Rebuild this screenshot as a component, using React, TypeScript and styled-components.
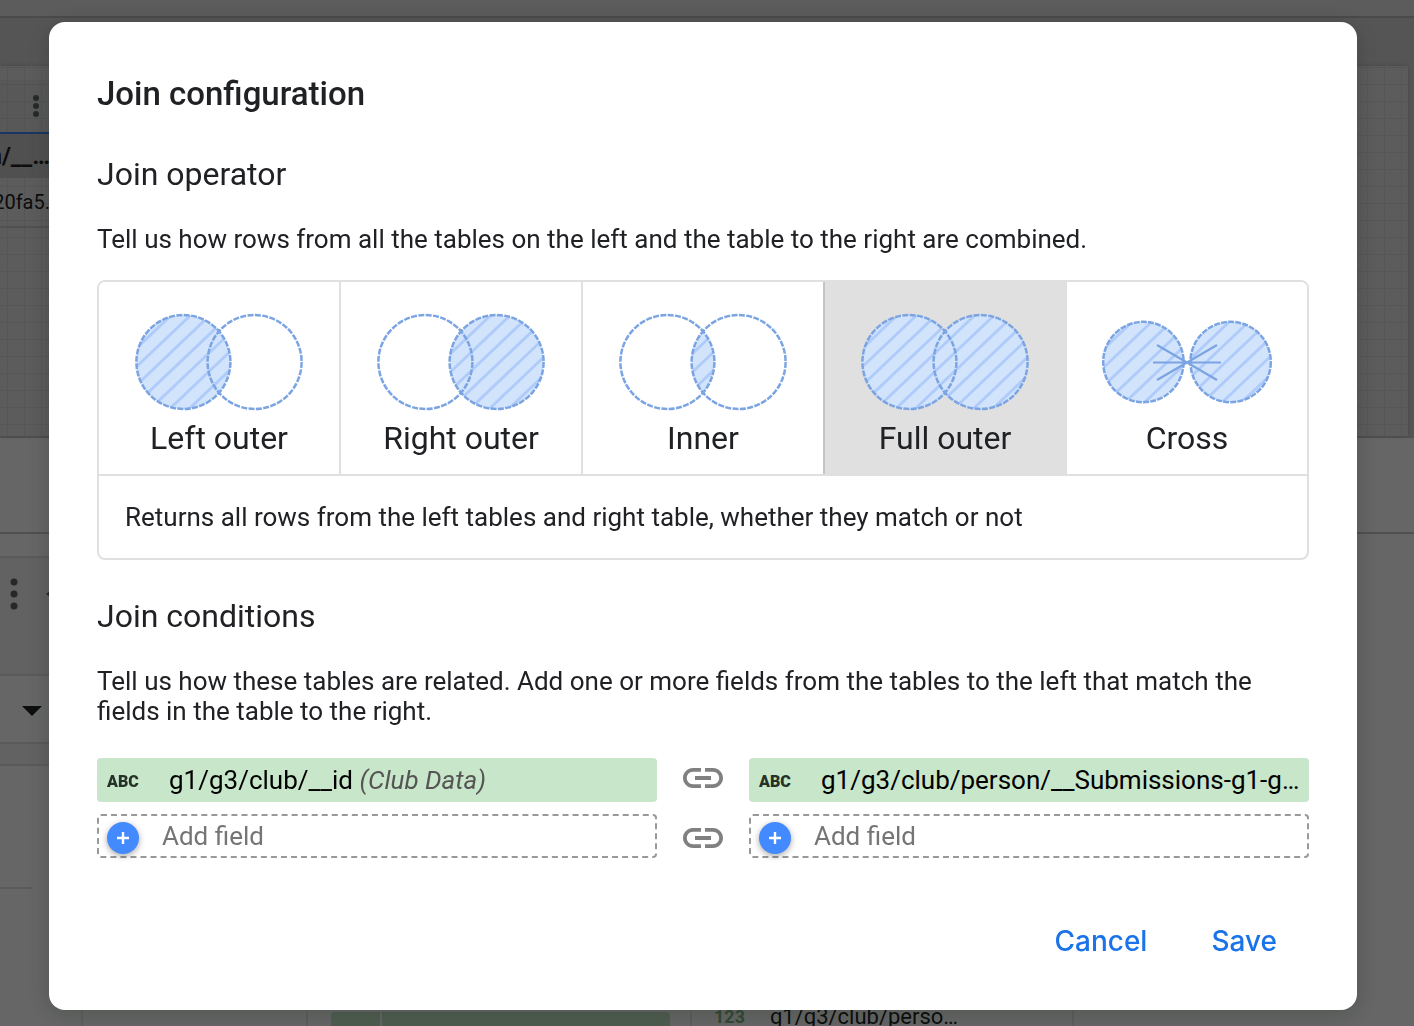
import React, { useState } from "react";
import styled, { createGlobalStyle } from "styled-components";

const GlobalStyle = createGlobalStyle`
  *, *::before, *::after { box-sizing: border-box; }
  body { margin: 0; font-family: Roboto, "Liberation Sans", sans-serif; color: #202124; }
  h1, h2, p, fieldset { margin: 0; }
  button { font: inherit; color: inherit; border: 0; background: none; cursor: pointer; }
`;

/* ---------- editor behind the dialog ---------- */

const Editor = styled.div`
  display: flex;
  flex-direction: column;
  height: 100vh;
  overflow: hidden;
  background: #fff;
`;

const TopBar = styled.div`
  flex: none;
  height: 18px;
  background: #e6e6e6;
  border-bottom: 2px solid #b8b8b8;
`;

const Workspace = styled.div`
  flex: none;
  padding: 48px 6px 0 0;
  background: #d5d5d5;
  border-bottom: 2px solid #d0d0d0;
`;

const Canvas = styled.div`
  height: 370px;
  padding-top: 14px;
  background-color: #e6e6e6;
  background-image:
    linear-gradient(to right, #d8d8d8 1px, transparent 1px),
    linear-gradient(to bottom, #d8d8d8 1px, transparent 1px);
  background-size: 17px 17px;
  background-position: 7px 1px;
  box-shadow: 0 0 4px rgba(0, 0, 0, 0.2);
`;

const Node = styled.div`
  width: 50px;
  border-bottom: 2px solid #c8c8c8;
`;

const NodeHeader = styled.div`
  display: flex;
  align-items: center;
  justify-content: flex-end;
  height: 54px;
  padding-right: 10px;
  background: rgba(0, 0, 0, 0.04);
  border-bottom: 2px solid #4285f4;
`;

const NodeRow = styled.div<{ $strong?: boolean }>`
  display: flex;
  align-items: center;
  justify-content: flex-end;
  height: ${(p) => (p.$strong ? 44 : 48)}px;
  overflow: hidden;
  white-space: nowrap;
  font-size: ${(p) => (p.$strong ? 24 : 20)}px;
  font-weight: ${(p) => (p.$strong ? 700 : 400)};
  background: ${(p) => (p.$strong ? "#c8c8c8" : "transparent")};
`;

const PanelHead = styled.div`
  flex: none;
  height: 96px;
  border-bottom: 2px solid #c8c8c8;
`;

const PanelBody = styled.div`
  flex: 1;
  display: flex;
  min-height: 0;
`;

const Column = styled.div<{ $width: number }>`
  flex: none;
  width: ${(p) => p.$width}px;
  border-right: 2px solid #eaeaea;
`;

const Strip = styled.div<{ $height: number; $tint?: string; $inset?: number }>`
  display: flex;
  align-items: center;
  height: ${(p) => p.$height}px;
  margin-right: ${(p) => p.$inset ?? 0}px;
  background: ${(p) => p.$tint ?? "transparent"};
  border-bottom: 2px solid #e0e0e0;
`;

const StripHeader = styled(Strip)`
  align-items: flex-start;
  gap: 28px;
  padding: 20px 0 0 10px;
`;

const Caret = styled.span`
  width: 0;
  margin: 4px 0 0 22px;
  border: 10px solid transparent;
  border-top-color: #202124;
  border-bottom: 0;
`;

const GreenField = styled.div`
  display: flex;
  height: 44px;
  margin: 478px 20px 0 23px;
  border-radius: 4px;
  background: #c8e6c9;
`;

const GreenFieldType = styled.span`
  width: 51px;
  border-right: 2px solid #fff;
`;

const MetricField = styled.div`
  display: flex;
  gap: 25px;
  margin: 469px 20px 0 22px;
  font-size: 22px;
  line-height: 28px;
  white-space: nowrap;
`;

const MetricType = styled.span`
  font-weight: 700;
  font-size: 18px;
  color: #81b784;
`;

const Dots = ({ height, radius }: { height: number; radius: number }) => (
  <svg width="8" height={height} viewBox={`0 0 8 ${height}`} aria-hidden="true">
    {[4, height / 2, height - 4].map((cy) => (
      <circle key={cy} cx="4" cy={cy} r={radius} fill="#5f6368" />
    ))}
  </svg>
);

const ArrowTip = () => (
  <svg width="8" height="32" viewBox="0 0 8 32" aria-hidden="true">
    <path d="M8 10L0 16l8 6z" fill="#5f6368" />
  </svg>
);

/* ---------- dialog ---------- */

const Scrim = styled.div`
  position: fixed;
  inset: 0;
  display: flex;
  align-items: flex-start;
  padding: 22px 57px 16px 49px;
  overflow: auto;
  background: rgba(0, 0, 0, 0.6);
`;

const Dialog = styled.section`
  flex: 1;
  min-width: 0;
  display: flex;
  flex-direction: column;
  padding: 52px 48px 33px;
  border-radius: 16px;
  background: #fff;
  box-shadow: 0 4px 24px 2px rgba(10, 30, 15, 0.2);
`;

const Title = styled.h1`
  font-size: 33px;
  line-height: 40px;
  font-weight: 500;
`;

const Heading = styled.h2<{ $gap: number }>`
  margin-top: ${(p) => p.$gap}px;
  font-size: 32px;
  line-height: 40px;
  font-weight: 400;
`;

const Paragraph = styled.p`
  margin-top: 30px;
  font-size: 26px;
  line-height: 30px;
`;

const OperatorBox = styled.div`
  margin-top: 26px;
  border: 2px solid #e0e0e0;
  border-radius: 8px;
  overflow: hidden;
`;

const OperatorList = styled.fieldset`
  display: flex;
  min-width: 0;
  padding: 0;
  border: 0;
  border-bottom: 2px solid #e0e0e0;
`;

const OperatorTile = styled.label<{ $selected: boolean; $edge: string }>`
  position: relative;
  box-sizing: content-box;
  flex: 1 1 0;
  min-width: 0;
  display: flex;
  flex-direction: column;
  align-items: center;
  gap: 6px;
  padding: 30px 0 16px;
  border-right: 2px solid ${(p) => p.$edge};
  font-size: 32px;
  line-height: 40px;
  cursor: pointer;
  background: ${(p) => (p.$selected ? "#e0e0e0" : "#fff")};

  &:last-child {
    border-right: 0;
  }
`;

const HiddenRadio = styled.input`
  position: absolute;
  inset: 0;
  margin: 0;
  opacity: 0;
  cursor: pointer;
`;

const Description = styled.p`
  padding: 26px;
  font-size: 26px;
  line-height: 30px;
`;

const Conditions = styled.div`
  display: grid;
  grid-template-columns: minmax(0, 1fr) 92px minmax(0, 1fr);
  align-items: center;
  margin-top: 28px;
`;

const Stack = styled.div`
  display: flex;
  flex-direction: column;
  gap: 12px;
`;

const LinkStack = styled(Stack)`
  align-items: center;
`;

const FieldChip = styled.button`
  display: flex;
  align-items: center;
  height: 44px;
  padding: 0 6px 0 10px;
  border-radius: 4px;
  background: #c8e6c9;
  color: #000;
  font-size: 26px;
  line-height: 30px;
  text-align: left;
`;

const FieldType = styled.span`
  flex: none;
  width: 62px;
  padding-top: 4px;
  font-size: 16px;
  line-height: 20px;
  font-weight: 900;
  color: #263228;
`;

const FieldName = styled.span`
  min-width: 0;
  overflow: hidden;
  text-overflow: ellipsis;
  white-space: nowrap;
`;

const FieldSource = styled.em`
  color: #555;
`;

const AddField = styled.button`
  display: flex;
  align-items: center;
  gap: 23px;
  height: 44px;
  padding: 0 8px;
  border: 2px dashed #999;
  border-radius: 4px;
  color: #757575;
  font-size: 26px;
  line-height: 30px;
`;

const AddBadge = styled.span`
  display: flex;
  align-items: center;
  justify-content: center;
  align-self: flex-end;
  width: 32px;
  height: 32px;
  margin-bottom: 2px;
  border-radius: 50%;
  background: #448aff;
  box-shadow: 0 2px 6px rgba(0, 0, 0, 0.35);
`;

const Actions = styled.div`
  display: flex;
  justify-content: flex-end;
  margin-top: 43px;
`;

const TextButton = styled.button`
  height: 72px;
  padding: 0 32px;
  font-family: Inter, Roboto, sans-serif;
  font-size: 28px;
  font-weight: 500;
  color: #1a73e8;
`;

/* ---------- drawings ---------- */

type Fill = "left" | "right" | "inner" | "full" | "cross";

const STRIPES = [-6, -5, -4, -3, -2, -1, 0, 1, 2, 3, 4, 5, 6];

const Venn = ({ kind }: { kind: Fill }) => {
  const cross = kind === "cross";
  const dx = cross ? 43.6 : 35.6;
  const r = cross ? 40.2 : 47;
  const left = <circle cx={-dx} cy="0" r={r} />;
  const right = <circle cx={dx} cy="0" r={r} />;
  return (
    <svg width="172" height="100" viewBox="-86 -50 172 100" aria-hidden="true">
      <clipPath id={`right-${kind}`}>{right}</clipPath>
      <clipPath id={`area-${kind}`}>
        {kind === "inner" && <circle cx={-dx} cy="0" r={r} clipPath={`url(#right-${kind})`} />}
        {kind !== "right" && kind !== "inner" && left}
        {kind !== "left" && kind !== "inner" && right}
      </clipPath>
      <g clipPath={`url(#area-${kind})`}>
        <rect x="-86" y="-50" width="172" height="100" fill="#d2e3fc" />
        {STRIPES.map((k) => (
          <line key={k} x1={k * 19.4 - 60} y1="57" x2={k * 19.4 + 60} y2="-57" stroke="#aecbfa" strokeWidth="2.8" />
        ))}
      </g>
      <g fill="none" stroke="#7ba4e2" strokeWidth="2.5" strokeDasharray={cross ? "5.9 1.28" : "6 1.38"}>
        {left}
        {right}
      </g>
      {cross && (
        <path d="M-34 .5H34M-30-17L30 18M-30 18L30-17" fill="none" stroke="#7ba4e2" strokeWidth="2.2" />
      )}
    </svg>
  );
};

const LinkIcon = () => (
  <svg width="48" height="48" viewBox="0 0 24 24" fill="#808080" aria-hidden="true">
    <path d="M3.9 12c0-1.71 1.39-3.1 3.1-3.1h4V7H7c-2.76 0-5 2.24-5 5s2.24 5 5 5h4v-1.9H7c-1.71 0-3.1-1.39-3.1-3.1zM8 13h8v-2H8v2zm9-6h-4v1.9h4c1.71 0 3.1 1.39 3.1 3.1s-1.39 3.1-3.1 3.1h-4V17h4c2.76 0 5-2.24 5-5s-2.24-5-5-5z" />
  </svg>
);

const PlusIcon = () => (
  <svg width="12" height="12" viewBox="0 0 12 12" aria-hidden="true">
    <path d="M6 0v12M0 6h12" stroke="#fff" strokeWidth="2.4" />
  </svg>
);

const OPERATORS: { kind: Fill; label: string; text: string }[] = [
  { kind: "left", label: "Left outer", text: "Returns matching rows from the right table, plus non-matching rows from the left tables" },
  { kind: "right", label: "Right outer", text: "Returns matching rows from the left tables, plus non-matching rows from the right table" },
  { kind: "inner", label: "Inner", text: "Returns only matching rows from the left tables and right table" },
  { kind: "full", label: "Full outer", text: "Returns all rows from the left tables and right table, whether they match or not" },
  { kind: "cross", label: "Cross", text: "Returns every possible combination of rows from the left tables and right table" },
];

const AddFieldButton = () => (
  <AddField type="button">
    <AddBadge>
      <PlusIcon />
    </AddBadge>
    Add field
  </AddField>
);

export default function App() {
  const [selected, setSelected] = useState<Fill>("full");
  const selectedIndex = OPERATORS.findIndex((o) => o.kind === selected);

  return (
    <>
      <GlobalStyle />
      <Editor aria-hidden="true">
        <TopBar />
        <Workspace>
          <Canvas>
            <Node>
              <NodeHeader>
                <Dots height={24} radius={3} />
              </NodeHeader>
              <NodeRow $strong>n/__…</NodeRow>
              <NodeRow>20fa5.</NodeRow>
            </Node>
          </Canvas>
        </Workspace>
        <PanelHead />
        <PanelBody>
          <Column $width={83}>
            <Strip $height={24} />
            <StripHeader $height={118} $tint="#f4f4f4">
              <Dots height={32} radius={3.5} />
              <ArrowTip />
            </StripHeader>
            <Strip $height={68}>
              <Caret />
            </Strip>
            <Strip $height={22} $tint="#f4f4f4" />
            <Strip $height={123} $inset={49} />
          </Column>
          <Column $width={225} />
          <Column $width={384}>
            <GreenField>
              <GreenFieldType />
            </GreenField>
          </Column>
          <Column $width={382}>
            <MetricField>
              <MetricType>123</MetricType>
              <span>g1/g3/club/perso…</span>
            </MetricField>
          </Column>
        </PanelBody>
      </Editor>

      <Scrim>
        <Dialog role="dialog" aria-modal="true" aria-labelledby="dialog-title">
          <Title id="dialog-title">Join configuration</Title>

          <Heading $gap={40}>Join operator</Heading>
          <Paragraph>Tell us how rows from all the tables on the left and the table to the right are combined.</Paragraph>
          <OperatorBox>
            <OperatorList aria-label="Join operator">
              {OPERATORS.map((o, i) => (
                <OperatorTile
                  key={o.kind}
                  $selected={i === selectedIndex}
                  $edge={i === selectedIndex - 1 ? "#c4c4c4" : "#e0e0e0"}
                >
                  <HiddenRadio
                    type="radio"
                    name="operator"
                    checked={i === selectedIndex}
                    onChange={() => setSelected(o.kind)}
                  />
                  <Venn kind={o.kind} />
                  {o.label}
                </OperatorTile>
              ))}
            </OperatorList>
            <Description>{OPERATORS[selectedIndex].text}</Description>
          </OperatorBox>

          <Heading $gap={36}>Join conditions</Heading>
          <Paragraph>
            Tell us how these tables are related. Add one or more fields from the tables to the left that match the
            fields in the table to the right.
          </Paragraph>
          <Conditions>
            <Stack>
              <FieldChip type="button">
                <FieldType>ABC</FieldType>
                <FieldName>
                  g1/g3/club/__id <FieldSource>(Club Data)</FieldSource>
                </FieldName>
              </FieldChip>
              <AddFieldButton />
            </Stack>
            <LinkStack>
              <LinkIcon />
              <LinkIcon />
            </LinkStack>
            <Stack>
              <FieldChip type="button">
                <FieldType>ABC</FieldType>
                <FieldName>g1/g3/club/person/__Submissions-g1-g3-club</FieldName>
              </FieldChip>
              <AddFieldButton />
            </Stack>
          </Conditions>

          <Actions>
            <TextButton type="button">Cancel</TextButton>
            <TextButton type="button">Save</TextButton>
          </Actions>
        </Dialog>
      </Scrim>
    </>
  );
}
